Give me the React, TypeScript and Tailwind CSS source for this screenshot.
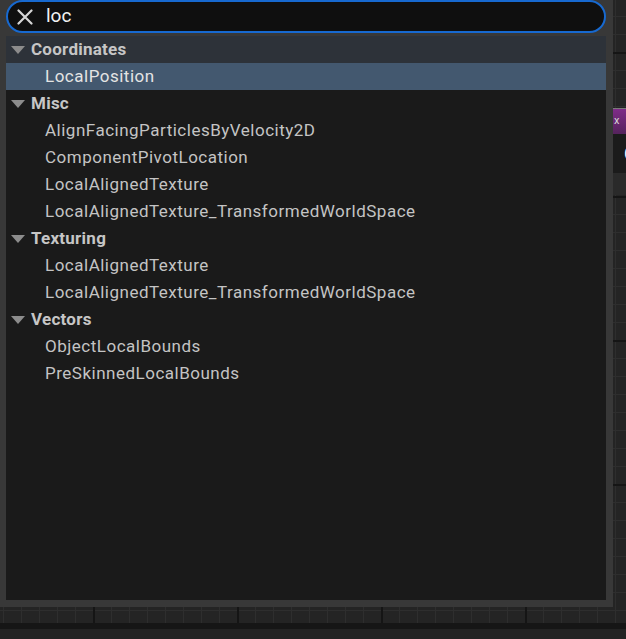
import React from "react";

type Group = { name: string; items: string[] };

const groups: Group[] = [
  { name: "Coordinates", items: ["LocalPosition"] },
  {
    name: "Misc",
    items: [
      "AlignFacingParticlesByVelocity2D",
      "ComponentPivotLocation",
      "LocalAlignedTexture",
      "LocalAlignedTexture_TransformedWorldSpace",
    ],
  },
  {
    name: "Texturing",
    items: ["LocalAlignedTexture", "LocalAlignedTexture_TransformedWorldSpace"],
  },
  { name: "Vectors", items: ["ObjectLocalBounds", "PreSkinnedLocalBounds"] },
];

function Triangle() {
  return (
    <svg width="14" height="8" viewBox="0 0 14 8" className="shrink-0">
      <path d="M0 0 L14 0 L7 8 Z" fill="#8c8c8c" />
    </svg>
  );
}

export default function App() {
  return (
    <div
      className="w-[626px] h-[639px] flex flex-col overflow-hidden"
      style={{ fontFamily: "Roboto, 'Noto Sans', sans-serif" }}
    >
      <div className="relative flex-1 bg-[#242424] bg-[linear-gradient(to_right,#151515_2px,transparent_2px),linear-gradient(to_bottom,#151515_2px,transparent_2px),linear-gradient(to_right,#2e2e2e_1px,transparent_1px),linear-gradient(to_bottom,#2e2e2e_1px,transparent_1px)] bg-[size:144px_144px,144px_144px,18px_18px,18px_18px] bg-[position:93px_0,0_52px,3px_0,0_16px]">
        {/* graph node partially visible */}
        <div className="absolute left-[613px] top-[108px] w-[200px] flex flex-col">
          <div className="h-[1px] bg-[#7a7a7a]" />
          <div className="h-[25px] bg-[linear-gradient(to_bottom,#7f2c88,#55235c)] flex items-center pl-[1px] text-[#d8d8d8] text-[11px]">
            x
          </div>
          <div className="h-[39px] bg-[#1b1b1b] flex items-center pl-[11px] text-white text-[18px]">
            C
          </div>
          <div className="h-[22px] bg-[#2a2a2a]" />
        </div>

        {/* popup menu */}
        <div className="absolute left-0 top-0 w-[613px] h-[607px] bg-[#383838] flex flex-col px-[6px] pb-[7px] pr-[7px]">
          <div className="h-[33px] shrink-0 rounded-full border-2 border-[#1769d0] bg-[#0f0f0f] flex items-center">
            <svg width="16" height="16" viewBox="0 0 16 16" className="ml-[9px]">
              <path d="M1.5 1.5 L14.5 14.5 M14.5 1.5 L1.5 14.5" stroke="#d6d6d6" strokeWidth="2.2" strokeLinecap="round" />
            </svg>
            <span className="ml-[13px] text-[19px] leading-none text-[#f2f2f2] pb-[3px]">loc</span>
          </div>
          <div className="mt-[3px] flex-1 bg-[#1a1a1a] flex flex-col">
            {groups.map((g, gi) => (
              <React.Fragment key={g.name}>
                <div
                  className={
                    "h-[27px] flex items-center pl-[5px] gap-[6px] " +
                    (gi === 0 ? "bg-[#2d3239]" : "")
                  }
                >
                  <Triangle />
                  <span className="text-[17px] font-bold tracking-[0.25px] text-[#c6c6c6]">{g.name}</span>
                </div>
                {g.items.map((it, ii) => {
                  const sel = gi === 0 && ii === 0;
                  return (
                    <div
                      key={g.name + it}
                      className={
                        "h-[27px] flex items-center pl-[39px] text-[17px] tracking-[0.5px] " +
                        (sel ? "bg-[#43586f] text-[#e4e4e4]" : "text-[#c4c4c4]")
                      }
                    >
                      {it}
                    </div>
                  );
                })}
              </React.Fragment>
            ))}
          </div>
        </div>
      </div>
      <div className="h-[6px] bg-[#161616]" />
      <div className="h-[10px] bg-[#232323]" />
    </div>
  );
}
